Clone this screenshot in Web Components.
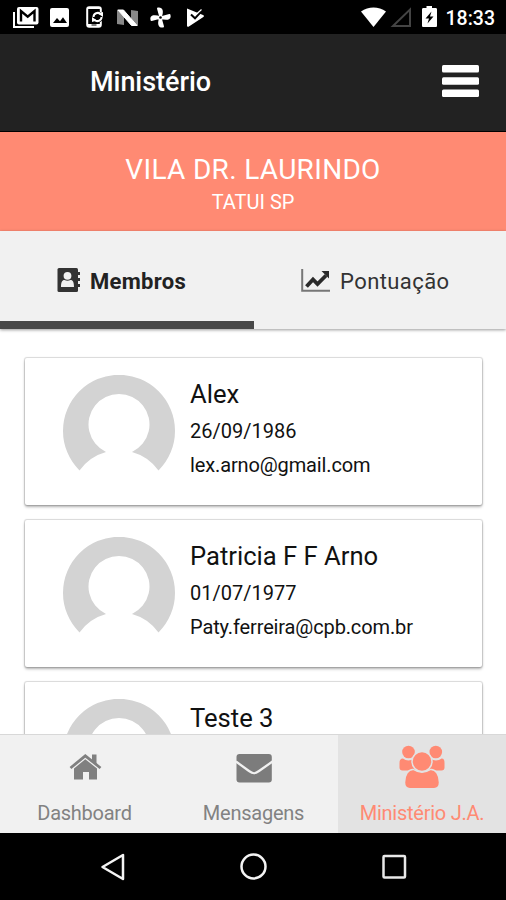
<!DOCTYPE html>
<html lang="pt-BR">
<head>
<meta charset="utf-8">
<title>Ministério</title>
<style>
  body {
    margin: 0;
    font-family: Roboto, "Liberation Sans", sans-serif;
  }
</style>
</head>
<body>
<ministry-app></ministry-app>

<script>
const define = (name, html) => {
  const template = document.createElement('template');
  template.innerHTML = `<style>
    * { box-sizing: border-box; }
    svg { display: block; flex: none; }
  </style>${html}`;

  customElements.define(name, class extends HTMLElement {
    constructor() {
      super();
      this.attachShadow({ mode: 'open' });
      this.shadowRoot.appendChild(template.content.cloneNode(true));
    }
  });
};

define('status-bar', `
  <style>
    :host {
      display: flex;
      justify-content: space-between;
      height: 34px;
      background: #000;
      color: #fff;
    }

    .right {
      display: flex;
      padding-right: 11px;
    }

    .time {
      font-size: 19.5px;
      font-weight: 500;
      line-height: 37px;
    }
  </style>
  <svg width="220" height="34" fill="#fff">
    <path d="M14 12v15H34" fill="none" stroke="#fff" stroke-width="2"/>
    <rect x="17" y="7" width="21.500" height="17.500" rx="2"/>
    <path d="M21 21.500V11l6.700 5.600L34.500 11v10.500" fill="none" stroke="#000" stroke-width="2.400"/>
    <rect x="50" y="8" width="19" height="19" rx="2"/>
    <path d="M53 23l4-5 3 3.300 3-4 4 5.700z" fill="#000"/>
    <rect x="87.200" y="7.200" width="13.600" height="19.600" rx="2" fill="none" stroke="#fff" stroke-width="2"/>
    <path d="M87 7h14v2H87zM87 24h14v3H87z"/>
    <rect x="91.500" y="24.500" width="5" height="1" fill="#000"/>
    <circle cx="97.500" cy="17" r="5.800" fill="#000"/>
    <path d="M93.500 17a4.200 4.200 0 0 1 7-3M101.600 17a4.200 4.200 0 0 1-7 3" fill="none" stroke="#fff" stroke-width="2"/>
    <path d="M98 13.500l5-1.500v5zM97 20.500l-5 1.500v-5z"/>
    <path d="M117 9.500l7 3V25l-7-1zM131 10l7 1V26l-7-3z" fill="#888"/>
    <path d="M118 10h5.500L137 25.500h-5.500z" stroke="#fff"/>
    <path d="M160.500 17.500l-2.500-9c4-.5 5 3 2.500 9zM160.500 17.500l9-2.500c1 4-3 5-9 2.500zM160.500 17.500l2.500 9c-4 .5-5-3-2.500-9zM160.500 17.500l-9 2.500c-1-4 3-5 9-2.500z" stroke="#fff" stroke-width="2" stroke-linejoin="round"/>
    <circle cx="160.500" cy="17.500" r="1.300" fill="#000"/>
    <path d="M187 8.500l16 6.500c1.500.7 1 1.700 0 2.300L188.500 26.700c-1 .4-1.500 0-1.500-1z"/>
    <path d="M191 14.500l4 3.800 8-8.800" fill="none" stroke="#000" stroke-width="2"/>
    <path d="M196 14.500l5.500-5" stroke="#fff" stroke-width="1.200"/>
  </svg>
  <div class="right">
    <svg width="86" height="34" viewBox="360 0 86 34">
      <path d="M361 11.500c7.500-5.500 17.500-5.500 25 0L373.500 27z" fill="#fff"/>
      <path d="M393 26L410 9.500V26z" fill="none" stroke="#444" stroke-width="2"/>
      <path d="M426.500 8V6h5.500v2h3.500c1 0 1.500.5 1.500 1.500V25.500c0 1-.5 1.500-1.500 1.500H423.500c-1 0-1.500-.5-1.500-1.500V9.500c0-1 .5-1.500 1.500-1.500z" fill="#fff"/>
      <path d="M431.500 11.500l-6 7h3.500l-1.500 5 6-7h-3.500z" fill="#000"/>
    </svg>
    <span class="time">18:33</span>
  </div>
`);

define('app-header', `
  <style>
    :host {
      display: flex;
      justify-content: space-between;
      align-items: center;
      height: 98px;
      padding: 0 27px 4px 90px;
      background: #222;
      border-bottom: 1px solid #000;
      color: #fff;
      font-size: 27px;
      font-weight: 500;
    }

    .title {
      padding-top: 2px;
      letter-spacing: -0.05px;
    }
  </style>
  <div class="title"><slot></slot></div>
  <svg width="37" height="32" fill="#fff">
    <rect width="37" height="7.500" rx="1.500"/>
    <rect y="12.300" width="37" height="7.500" rx="1.500"/>
    <rect y="24.500" width="37" height="7.500" rx="1.500"/>
  </svg>
`);

define('club-banner', `
  <style>
    :host {
      display: flex;
      flex-direction: column;
      align-items: center;
      height: 99px;
      padding-top: 21px;
      background: #ff8a73;
      color: #fff;
      font-size: 20px;
      line-height: 30px;
    }

    .name {
      font-size: 28px;
      line-height: 34px;
      letter-spacing: 0.32px;
    }
  </style>
  <div class="name"><slot name="name"></slot></div>
  <div><slot></slot></div>
`);

define('tab-bar', `
  <style>
    :host {
      position: relative;
      display: grid;
      grid-template-columns: 254px 1fr;
      height: 98px;
      background: #f1f1f1;
      box-shadow: 0 1px 3px rgba(0, 0, 0, 0.4);
      color: #333;
      font-size: 22px;
      letter-spacing: 0.42px;
    }

    .tab {
      display: flex;
      align-items: center;
      padding: 2px 0 0 56px;
      gap: 9px;
    }

    .active {
      padding-top: 10px;
      border-bottom: 8px solid #484848;
      color: #222;
      font-weight: 700;
      letter-spacing: 0.3px;
    }

    .tab + .tab {
      padding-left: 47px;
    }

    .tab svg {
      margin-top: -2px;
    }
  </style>
  <div class="tab active">
    <svg width="25" height="26">
      <rect x="1.500" y="1" width="20.500" height="24" rx="1.500" fill="#333"/>
      <path d="M22 5h2v3h-2zM22 11h2v3h-2zM22 17h2v3h-2z" fill="#333"/>
      <circle cx="11.500" cy="8.800" r="3.900" fill="#f1f1f1"/>
      <path d="M5 20c0-4.500 1-7 3.500-7 2 1 4 1 6 0C17 13 18 15.500 18 20z" fill="#f1f1f1"/>
    </svg>
    <span>Membros</span>
  </div>
  <div class="tab">
    <svg width="30" height="25">
      <path d="M1.200 1v21.800H29" fill="none" stroke="#777" stroke-width="2"/>
      <path d="M5.500 18.500l6.500-7 4.500 4.500 8.500-8.500" fill="none" stroke="#2a2a2a" stroke-width="3.800"/>
      <path d="M20.500 3H28v7.500z" fill="#2a2a2a"/>
    </svg>
    <span>Pontuação</span>
  </div>
`);

define('member-card', `
  <style>
    :host {
      display: flex;
      gap: 15px;
      flex: none;
      height: 147px;
      padding: 17px 0 0 38px;
      background: #fff;
      border-radius: 2px;
      box-shadow: 0 0 1px 1px rgba(0, 0, 0, 0.14), 0 2px 3px rgba(0, 0, 0, 0.3);
      color: #111;
      font-size: 20px;
      line-height: 34px;
    }

    .name {
      font-size: 25.6px;
      line-height: 39px;
    }

    .email {
      letter-spacing: -0.13px;
    }
  </style>
  <svg width="112" height="112">
    <path d="M16.500 95.500A56 56 0 1 1 95.500 95.500A48.600 48.600 0 0 0 69 77A30.500 30.500 0 1 0 43 77A48.600 48.600 0 0 0 16.500 95.500z" fill="#d3d3d3"/>
  </svg>
  <div>
    <div class="name"><slot name="name"></slot></div>
    <div><slot name="birth"></slot></div>
    <div class="email"><slot name="email"></slot></div>
  </div>
`);

define('bottom-nav', `
  <style>
    :host {
      position: relative;
      display: grid;
      grid-template-columns: 169px 169px 168px;
      height: 99px;
      background: #f1f1f1;
      border-top: 1px solid #d8d8d8;
      color: #828282;
      font-size: 20px;
      letter-spacing: -0.25px;
    }

    .item {
      display: flex;
      flex-direction: column;
      align-items: center;
      padding-top: 8px;
      line-height: 24px;
      gap: 12px;
      white-space: nowrap;
    }

    .active {
      background: #e3e3e3;
      color: #ff8a73;
    }
  </style>
  <div class="item">
    <svg width="48" height="46" viewBox="61 743 48 46" fill="#808080">
      <path d="M92 754.500h4.500v10l-4.500-4z"/>
      <path d="M70.500 768L85.300 755.800 100.500 768" fill="none" stroke="#808080" stroke-width="2.800"/>
      <path d="M74 768.500l11.300-9.300L97 768.500v11h-8v-7.500h-6v7.500h-9z"/>
    </svg>
    <span>Dashboard</span>
  </div>
  <div class="item">
    <svg width="48" height="46" viewBox="229.500 743 48 46" fill="#7c7c7c">
      <rect x="236" y="754" width="35.300" height="28.500" rx="3"/>
      <path d="M235.500 761.500l13 9.500c4 3 6 3 10 0l13.500-9.500" fill="none" stroke="#f1f1f1" stroke-width="2.200"/>
    </svg>
    <span>Mensagens</span>
  </div>
  <div class="item active">
    <svg width="48" height="46" viewBox="398.500 743 48 46" fill="#ff8a73">
      <circle cx="409" cy="752" r="6.300"/>
      <circle cx="436.300" cy="752" r="6.300"/>
      <path d="M403.500 758.500c3 2.500 8 2.500 11 0l2 12H403c-2 0-3-1-3-3v-4.500c0-3 1-4.500 3.500-4.500zM431 758.500c3 2.500 8 2.500 11 0 2.500 0 3 1.500 3 4.500v4.500c0 2-1 3-3 3H430z"/>
      <g stroke="#e3e3e3" stroke-width="1.500">
        <circle cx="422.500" cy="761.500" r="10"/>
        <path d="M414 769.500c5 3.500 12 3.500 17 0 5-.5 9 5 9 13 0 4-2 6.200-5.500 6.200h-24c-3.500 0-5.500-2.200-5.500-6.200 0-8 4-13.500 9-13z"/>
      </g>
    </svg>
    <span>Ministério J.A.</span>
  </div>
`);

define('system-nav', `
  <style>
    :host {
      display: flex;
      justify-content: space-between;
      align-items: center;
      height: 67px;
      padding: 0 98px 0 99px;
      background: #000;
    }
  </style>
  <svg width="28" height="28" fill="none" stroke="#f4f4f4" stroke-width="2.500" stroke-linejoin="round">
    <path d="M24 2v24L3.500 14z"/>
  </svg>
  <svg width="28" height="28" fill="none" stroke="#f4f4f4" stroke-width="2.500">
    <circle cx="13.500" cy="13.500" r="12"/>
  </svg>
  <svg width="28" height="28" fill="none" stroke="#e8e8e8" stroke-width="2.500">
    <rect x="3.500" y="3" width="21.500" height="21.500" rx="1"/>
  </svg>
`);

define('ministry-app', `
  <style>
    :host {
      display: flex;
      flex-direction: column;
      width: 506px;
      height: 900px;
      overflow: hidden;
      background: #fff;
    }

    .members {
      display: flex;
      flex-direction: column;
      flex: 1;
      gap: 15px;
      min-height: 0;
      padding: 29px 24px 0 25px;
      overflow: hidden;
    }
  </style>
  <status-bar></status-bar>
  <app-header>Ministério</app-header>
  <club-banner><span slot="name">VILA DR. LAURINDO</span>TATUI SP</club-banner>
  <tab-bar></tab-bar>
  <div class="members">
    <member-card>
      <span slot="name">Alex</span>
      <span slot="birth">26/09/1986</span>
      <span slot="email">lex.arno@gmail.com</span>
    </member-card>
    <member-card>
      <span slot="name">Patricia F F Arno</span>
      <span slot="birth">01/07/1977</span>
      <span slot="email">Paty.ferreira@cpb.com.br</span>
    </member-card>
    <member-card>
      <span slot="name">Teste 3</span>
    </member-card>
  </div>
  <bottom-nav></bottom-nav>
  <system-nav></system-nav>
`);
</script>
</body>
</html>
